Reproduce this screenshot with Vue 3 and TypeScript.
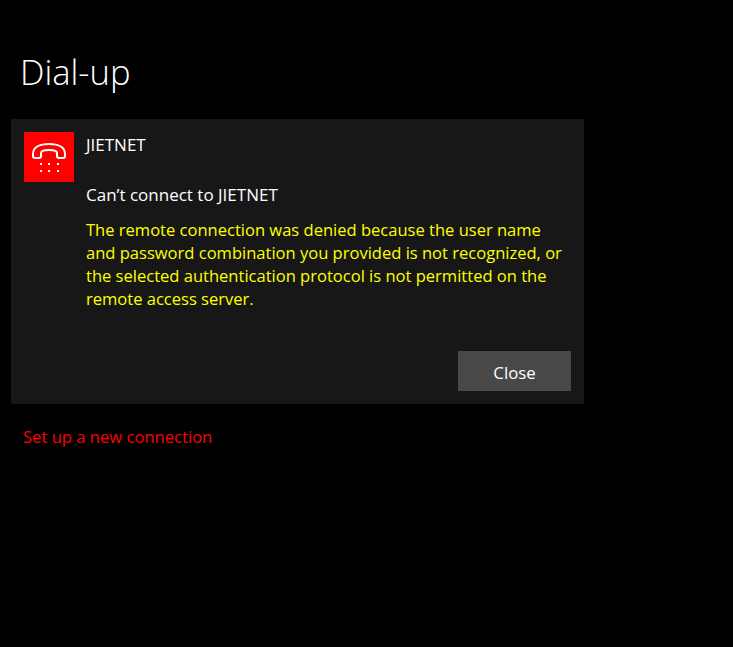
<script setup lang="ts">
const title = 'Dial-up'
const name = 'JIETNET'
const status = 'Can’t connect to JIETNET'
const lines = [
  'The remote connection was denied because the user name',
  'and password combination you provided is not recognized, or',
  'the selected authentication protocol is not permitted on the',
  'remote access server.',
]
</script>

<template>
  <main class="page">
    <h1 class="title">{{ title }}</h1>
    <section class="card">
      <div class="row">
        <div class="tile">
          <svg class="phone" viewBox="0 0 50 50" fill="none" stroke="#fff">
            <path d="M9 22 C9 15 16 12 25 12 C34 12 41 15 41 22 V24 Q41 26 39 26 H35 Q33 26 33 24 V21 C33 19 30 18 25 18 C20 18 17 19 17 21 V24 Q17 26 15 26 H11 Q9 26 9 24 Z" stroke-width="2" stroke-linejoin="round" />
            <g fill="#fff" stroke="none">
              <rect x="16" y="31" width="2" height="2" /><rect x="24" y="31" width="2" height="2" /><rect x="33" y="31" width="2" height="2" />
              <rect x="16" y="38" width="2" height="2" /><rect x="24" y="38" width="2" height="2" /><rect x="33" y="38" width="2" height="2" />
            </g>
          </svg>
        </div>
        <div class="body">
          <div class="name">{{ name }}</div>
          <div class="status">{{ status }}</div>
          <p class="error"><span v-for="l in lines" :key="l" class="line">{{ l }}</span></p>
        </div>
      </div>
      <div class="actions"><button class="close">Close</button></div>
    </section>
    <a class="link">Set up a new connection</a>
  </main>
</template>

<style scoped>
.page {
  width: 733px;
  height: 647px;
  box-sizing: border-box;
  padding-top: 49px;
  background: #000;
  color: #fff;
  font-family: "Open Sans", "Noto Sans", sans-serif;
  overflow: hidden;
}
.title {
  margin: 0 0 25px 20px;
  font-size: 34.6px;
  line-height: 45px;
  font-weight: 300;
}
.card {
  width: 573px;
  height: 285px;
  margin-left: 11px;
  padding: 13px;
  box-sizing: border-box;
  background: #171717;
  display: flex;
  flex-direction: column;
  justify-content: space-between;
}
.row { display: flex; gap: 12px; }
.tile {
  width: 50px;
  height: 50px;
  background: #f00;
  flex: none;
}
.phone { display: block; width: 50px; height: 50px; }
.name { font-size: 17px; line-height: 26px; }
.status { font-size: 17px; line-height: 24px; margin-top: 25px; }
.error { margin: 11px 0 0; font-size: 16.55px; line-height: 23px; color: #ff0; }
.line { display: block; white-space: nowrap; }
.actions { display: flex; justify-content: flex-end; }
.close {
  width: 113px;
  height: 40px;
  border: 0;
  background: #484848;
  color: #fff;
  font: inherit;
  font-size: 16.8px;
  padding: 2px 0 0;
}
.link {
  display: block;
  margin: 21px 0 0 23px;
  color: #f00;
  font-size: 16.6px;
  line-height: 24px;
}
</style>
